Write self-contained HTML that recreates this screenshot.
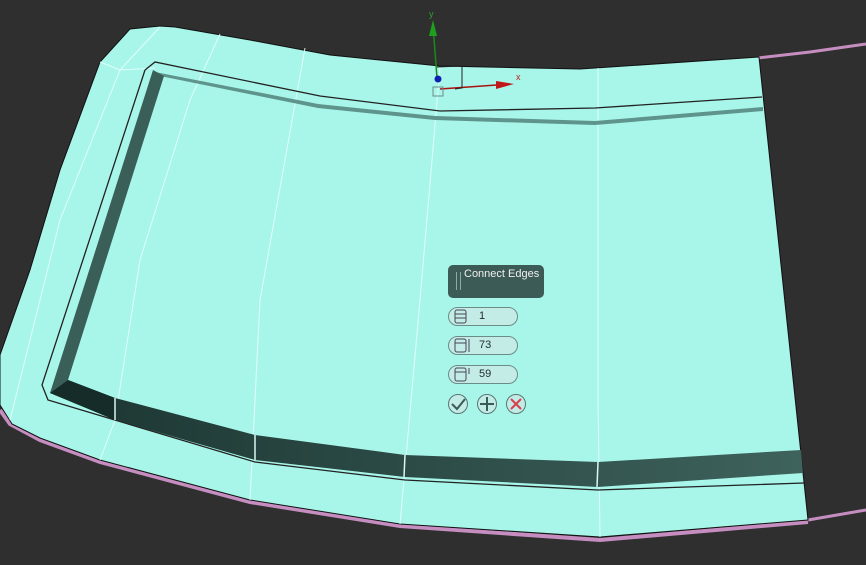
<!DOCTYPE html>
<html><head><style>html,body{margin:0;padding:0;background:#2e2e2e;width:866px;height:565px;overflow:hidden;font-family:"Liberation Sans",sans-serif}
.pill{position:absolute;left:448px;width:70px;height:19px;border:1px solid #6c8c88;border-radius:10px;background:#c3ece6;font-size:11px;color:#203030;box-sizing:border-box}
.pill span{position:absolute;left:30px;top:2px}
.rb{position:absolute;top:394px;width:20px;height:20px;border:1px solid #5a7672;border-radius:50%;background:#c3ece6;box-sizing:border-box}
</style></head><body>
<svg width="866" height="565" style="position:absolute;left:0;top:0">
<defs><linearGradient id="g" x1="0" x2="1" y1="0" y2="0"><stop offset="0" stop-color="#1c3632"/><stop offset="1" stop-color="#3e625c"/></linearGradient></defs>
<rect width="866" height="565" fill="#2f2f2f"/>
<polyline points="758,58 810,52 866,44" fill="none" stroke="#c68ec0" stroke-width="3"/>
<polyline points="808,520 866,510" fill="none" stroke="#c68ec0" stroke-width="3"/>
<path d="M0,410 L10,424 L40,440 L100,462 L250,502 L400,526 L600,540 L808,522" fill="none" stroke="#c68ec0" stroke-width="4"/>
<path d="M130,29 L160,26 L175,27 L250,40 L330,55 L440,66 L580,69 L759,57 L808,520 L600,537 L400,524 L250,500 L100,460 L40,438 L12,424 L0,405 L0,355 L30,270 L60,170 L100,62 Z" fill="#a8f6e9" stroke="#111" stroke-width="1"/>
<g stroke="#e6fffb" stroke-width="1" fill="none" opacity="0.9">
<polyline points="160,27 120,70 60,220 20,380 10,420"/>
<polyline points="220,34 190,100 140,260 115,420 100,460"/>
<polyline points="305,48 260,300 250,500"/>
<polyline points="440,67 420,300 400,524"/>
<polyline points="598,68 598,400 600,537"/>
<polyline points="100,62 120,70 155,68"/>
</g>
<polyline points="145,70 155,62 320,96 440,111 595,108 762,97" fill="none" stroke="#222" stroke-width="1.3"/>
<polyline points="145,70 42,385 48,400 255,462 405,480 598,490 804,483" fill="none" stroke="#222" stroke-width="1.3"/>
<polygon points="155,72 318,104 435,116 595,121 763,107 763,111 595,125 435,120 318,108 160,76" fill="#5e948c"/>
<polygon points="153,70 164,76 68,380 50,393" fill="#3a5e58"/>
<polygon points="50,393 68,380 115,398 255,435 405,455 598,462 801,450 803,473 598,487 405,477 255,460 115,420" fill="url(#g)"/>
<polygon points="50,393 68,380 115,398 115,420" fill="#152c28"/>
<g stroke="#d8f8f2" stroke-width="1.5"><line x1="115" y1="398" x2="115" y2="420"/><line x1="255" y1="435" x2="255" y2="460"/><line x1="405" y1="455" x2="404" y2="477"/><line x1="598" y1="462" x2="597" y2="487"/></g>
<line x1="437" y1="78" x2="433" y2="25" stroke="#1a8a1a" stroke-width="1.5"/>
<polygon points="433,20 429,36 437,36" fill="#1ea01e"/>
<text x="429" y="17" font-size="9" fill="#30a030">y</text>
<line x1="440" y1="89" x2="510" y2="84" stroke="#aa1111" stroke-width="1.5"/>
<polygon points="514,84 496,81 496,89" fill="#c01818"/>
<text x="516" y="80" font-size="9" fill="#c02020">x</text>
<polyline points="437,67 462,66 462,88 455,89" fill="none" stroke="#222" stroke-width="1"/>
<circle cx="438" cy="79" r="3.5" fill="#1020b0"/>
<rect x="433" y="87" width="10" height="9" fill="none" stroke="#6a8a88"/>
</svg>
<div style="position:absolute;left:448px;top:265px;width:96px;height:33px;background:#3c5a56;border-radius:5px;color:#f0f0f0;font-size:11px">
<div style="position:absolute;left:8px;top:7px;width:3px;height:18px;border-left:1px solid #8aa;border-right:1px solid #8aa"></div>
<span style="position:absolute;left:16px;top:3px">Connect Edges</span></div>
<div class="pill" style="top:307px"><span>1</span></div>
<div class="pill" style="top:336px"><span>73</span></div>
<div class="pill" style="top:365px"><span>59</span></div>
<svg width="866" height="565" style="position:absolute;left:0;top:0">
<g fill="none" stroke="#445" stroke-width="1"><rect x="455" y="310" width="11" height="13" rx="2"/><line x1="455" y1="314" x2="466" y2="314"/><line x1="455" y1="318" x2="466" y2="318"/>
<rect x="455" y="339" width="11" height="13" rx="2"/><line x1="455" y1="343" x2="466" y2="343"/><line x1="469" y1="339" x2="469" y2="352"/>
<rect x="455" y="368" width="11" height="13" rx="2"/><line x1="455" y1="372" x2="466" y2="372"/><line x1="469" y1="368" x2="469" y2="374"/></g>
</svg>
<div class="rb" style="left:448px"></div><div class="rb" style="left:477px"></div><div class="rb" style="left:506px"></div>
<svg width="866" height="565" style="position:absolute;left:0;top:0">
<polyline points="452,404 457,409 465,399" fill="none" stroke="#3a5a56" stroke-width="2"/>
<g stroke="#3a5a56" stroke-width="2"><line x1="487" y1="397" x2="487" y2="411"/><line x1="480" y1="404" x2="494" y2="404"/></g>
<g stroke="#d84050" stroke-width="2"><line x1="511" y1="399" x2="521" y2="409"/><line x1="521" y1="399" x2="511" y2="409"/></g>
</svg>
</body></html>
